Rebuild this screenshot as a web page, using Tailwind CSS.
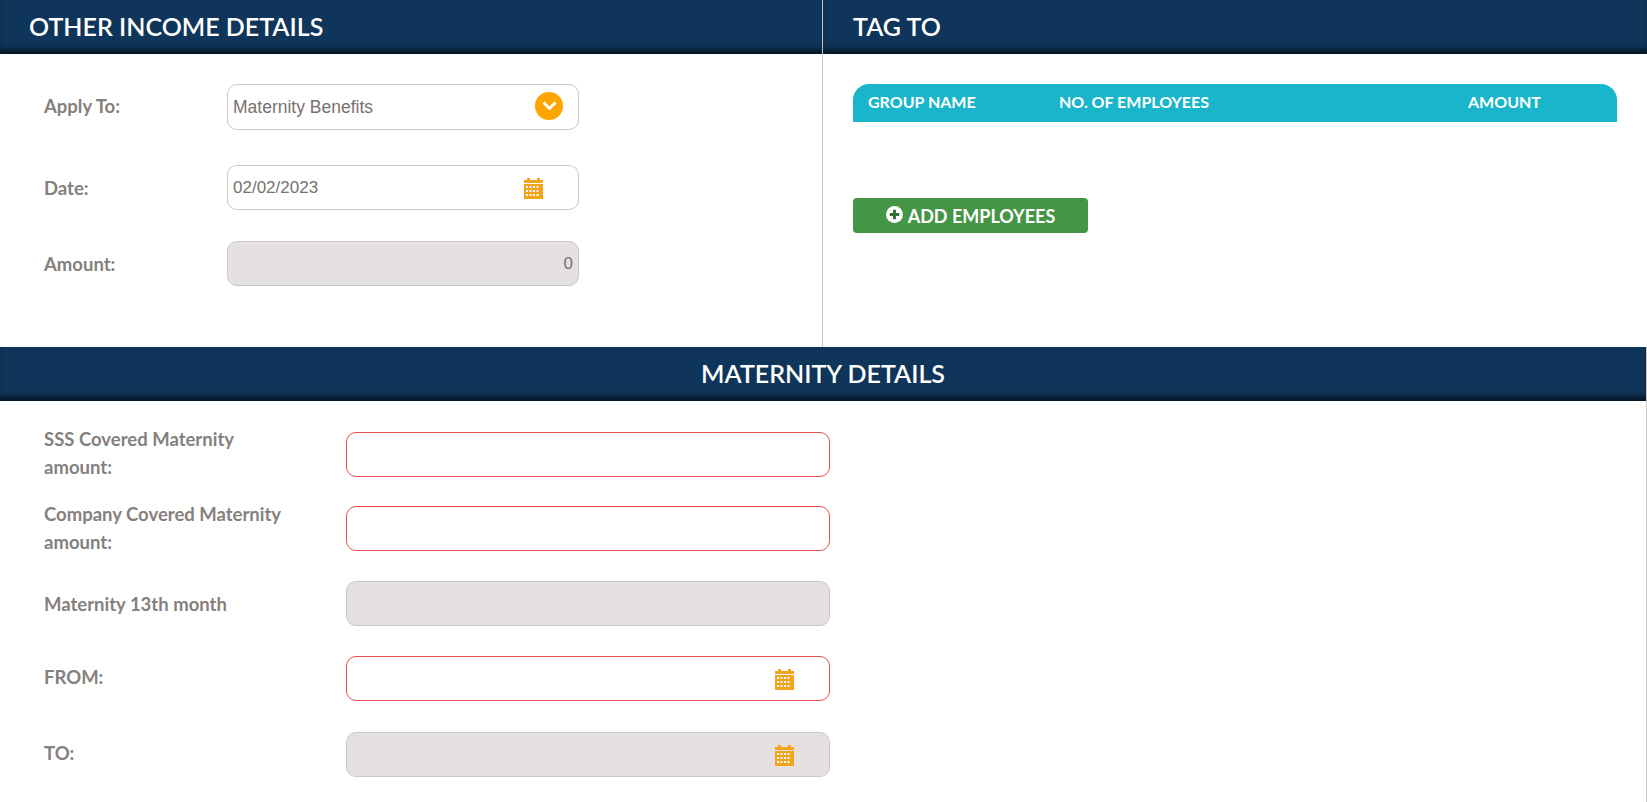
<!DOCTYPE html>
<html lang="en">

<head>
    <meta charset="UTF-8">
    <meta name="viewport" content="width=device-width, initial-scale=1.0">
    <title>Other Income Details</title>
    <script src="https://cdn.jsdelivr.net/npm/@tailwindcss/browser@4"></script>
</head>

<body class="bg-white h-[802px] overflow-hidden font-['Lato',sans-serif]">

    <!-- Top: Details + Tag To -->
    <div class="flex h-[347px]">
        <div class="w-[823px] border-r border-[#c8c8c8]">
            <h2 class="h-[54px] pl-[29px] flex items-center bg-[#10355a] shadow-[inset_0_-7px_6px_-3px_#04121f] text-white text-[25px] font-semibold">OTHER INCOME DETAILS</h2>

            <div class="pl-[44px] pt-[30px] flex flex-col">
                <div class="flex items-center h-[46px]">
                    <label class="w-[183px] text-[#85807d] text-[18.500px] font-bold">Apply To:</label>
                    <div class="relative w-[352px]">
                        <input type="text" value="Maternity Benefits" readonly class="w-full h-[46px] pl-[5px] pt-[1px] bg-white border border-[#c8c8c8] rounded-[10px] text-[17.500px] text-[#77716e] font-['Liberation_Sans',sans-serif]">
                        <span class="absolute right-[16px] top-[8px] w-[28px] h-[28px] rounded-full bg-[#ffa500] flex items-center justify-center">
                            <svg width="15" height="11" viewBox="0 0 15 11" fill="none" stroke="white" stroke-width="3"><path d="M1.500 1.500 7.500 7.500l6-6"/></svg>
                        </span>
                    </div>
                </div>

                <div class="flex items-center h-[45px] mt-[35px]">
                    <label class="w-[183px] pt-[2px] text-[#85807d] text-[18.500px] font-bold">Date:</label>
                    <div class="relative w-[352px]">
                        <input type="text" value="02/02/2023" readonly class="w-full h-[45px] pl-[5px] bg-white border border-[#c8c8c8] rounded-[10px] text-[17px] text-[#77716e] font-['Liberation_Sans',sans-serif]">
                        <svg class="absolute left-[297px] top-[13px]" width="19" height="21" viewBox="0 0 19 21" fill="#f5a31a"><path d="M0 2h3V0h3v2h7V0h3v2h3v3H0zM0 6h19v15H0z"/><path fill="white" d="M2 8h2v2H2zm3.500 0h2v2h-2zm3.500 0h2v2H9zm3.500 0h2v2h-2zM2 12h2v2H2zm3.500 0h2v2h-2zm3.500 0h2v2H9zm3.500 0h2v2h-2zM2 16h2v2H2zm3.500 0h2v2h-2zm3.500 0h2v2H9zm3.500 0h2v2h-2z"/></svg>
                    </div>
                </div>

                <div class="flex items-center h-[45px] mt-[31px]">
                    <label class="w-[183px] pt-[3px] text-[#85807d] text-[18.500px] font-bold">Amount:</label>
                    <input type="text" value="0" readonly class="w-[352px] h-[45px] pr-[5px] text-right bg-[#e5e1e1] border border-[#c8c8c8] rounded-[10px] text-[17px] text-[#77716e] font-['Liberation_Sans',sans-serif]">
                </div>
            </div>
        </div>

        <div class="flex-1">
            <h2 class="h-[54px] pl-[30px] flex items-center bg-[#10355a] shadow-[inset_0_-7px_6px_-3px_#04121f] text-white text-[25px] font-semibold">TAG TO</h2>

            <div class="pl-[30px] pr-[30px] pt-[30px]">
                <div class="h-[38px] pb-[2px] flex items-center bg-[#19b5cb] rounded-t-[16px] text-white text-[16px] font-bold">
                    <span class="w-[206px] pl-[15px]">GROUP NAME</span>
                    <span class="w-[409px]">NO. OF EMPLOYEES</span>
                    <span>AMOUNT</span>
                </div>
                <button class="mt-[76px] w-[235px] h-[35px] pt-[1px] flex items-center justify-center gap-[5px] bg-[#459547] rounded-[4px] text-white text-[18px] font-bold">
                    <svg class="mb-[4px]" width="17" height="17" viewBox="0 0 18 18"><circle cx="9" cy="9" r="9" fill="white"/><path d="M7.500 4h3v3.500H14v3h-3.500V14h-3v-3.500H4v-3h3.500z" fill="#2f6f31"/></svg>
                    ADD EMPLOYEES
                </button>
            </div>
        </div>
    </div>

    <!-- Maternity Details -->
    <h2 class="h-[54px] flex items-center justify-center bg-[#10355a] shadow-[inset_0_-7px_6px_-3px_#04121f] border-r border-[#c8c8c8] text-white text-[25px] font-semibold">MATERNITY DETAILS</h2>

    <div class="h-[401px] border-r border-[#c8c8c8] pl-[44px] pt-[31px] flex flex-col">
        <div class="flex items-center h-[45px]">
            <label class="w-[302px] pb-[3px] text-[#85807d] text-[18.500px] leading-[28px] font-bold">SSS Covered Maternity<br>amount:</label>
            <input type="text" class="w-[484px] h-[45px] bg-white border border-[#e8504f] rounded-[10px]">
        </div>

        <div class="flex items-center h-[45px] mt-[29px]">
            <label class="w-[302px] pb-[1px] text-[#85807d] text-[18.500px] leading-[28px] font-bold">Company Covered Maternity<br>amount:</label>
            <input type="text" class="w-[484px] h-[45px] bg-white border border-[#e8504f] rounded-[10px]">
        </div>

        <div class="flex items-center h-[45px] mt-[30px]">
            <label class="w-[302px] pt-[3px] text-[#85807d] text-[18.500px] font-bold">Maternity 13th month</label>
            <input type="text" readonly class="w-[484px] h-[45px] bg-[#e5e1e1] border border-[#c8c8c8] rounded-[10px]">
        </div>

        <div class="flex items-center h-[45px] mt-[30px]">
            <label class="w-[302px] pb-[1px] text-[#85807d] text-[18.500px] font-bold">FROM:</label>
            <div class="relative w-[484px]">
                <input type="text" class="w-full h-[45px] bg-white border border-[#e8504f] rounded-[10px]">
                <svg class="absolute left-[429px] top-[13px]" width="19" height="21" viewBox="0 0 19 21" fill="#f5a31a"><path d="M0 2h3V0h3v2h7V0h3v2h3v3H0zM0 6h19v15H0z"/><path fill="white" d="M2 8h2v2H2zm3.500 0h2v2h-2zm3.500 0h2v2H9zm3.500 0h2v2h-2zM2 12h2v2H2zm3.500 0h2v2h-2zm3.500 0h2v2H9zm3.500 0h2v2h-2zM2 16h2v2H2zm3.500 0h2v2h-2zm3.500 0h2v2H9zm3.500 0h2v2h-2z"/></svg>
            </div>
        </div>

        <div class="flex items-center h-[45px] mt-[31px]">
            <label class="w-[302px] pb-[1px] text-[#85807d] text-[18.500px] font-bold">TO:</label>
            <div class="relative w-[484px]">
                <input type="text" readonly class="w-full h-[45px] bg-[#e5e1e1] border border-[#c8c8c8] rounded-[10px]">
                <svg class="absolute left-[429px] top-[13px]" width="19" height="21" viewBox="0 0 19 21" fill="#f5a31a"><path d="M0 2h3V0h3v2h7V0h3v2h3v3H0zM0 6h19v15H0z"/><path fill="white" d="M2 8h2v2H2zm3.500 0h2v2h-2zm3.500 0h2v2H9zm3.500 0h2v2h-2zM2 12h2v2H2zm3.500 0h2v2h-2zm3.500 0h2v2H9zm3.500 0h2v2h-2zM2 16h2v2H2zm3.500 0h2v2h-2zm3.500 0h2v2H9zm3.500 0h2v2h-2z"/></svg>
            </div>
        </div>
    </div>

</body>

</html>
